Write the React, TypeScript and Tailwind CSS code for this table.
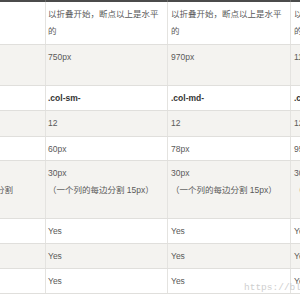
import React from "react";

type Row = {
  h: string;
  bg: string;
  c1?: React.ReactNode;
  c2: React.ReactNode;
  c3: React.ReactNode;
  c4: React.ReactNode;
  bold?: boolean;
};

const gutter = (
  <>
    30px
    <br />
    （一个列的每边分割 15px）
  </>
);

const first = (
  <>
    以折叠开始，断点以上是水平
    <br />
    的
  </>
);

const rows: Row[] = [
  { h: "h-[43px]", bg: "bg-white", c2: first, c3: first, c4: first },
  { h: "h-[41px]", bg: "bg-[#f4f3f0]", c2: "750px", c3: "970px", c4: "1170px" },
  { h: "h-[25px]", bg: "bg-white", c2: ".col-sm-", c3: ".col-md-", c4: ".col-lg-", bold: true },
  { h: "h-[26px]", bg: "bg-[#f4f3f0]", c2: "12", c3: "12", c4: "12" },
  { h: "h-[24px]", bg: "bg-white", c2: "60px", c3: "78px", c4: "95px" },
  {
    h: "h-[58px]",
    bg: "bg-[#f4f3f0]",
    c1: (
      <>
        <br />
        <span className="ml-[-4px]">分割</span>
      </>
    ),
    c2: gutter,
    c3: gutter,
    c4: gutter,
  },
  { h: "h-[25px]", bg: "bg-white", c2: "Yes", c3: "Yes", c4: "Yes" },
  { h: "h-[25px]", bg: "bg-[#f4f3f0]", c2: "Yes", c3: "Yes", c4: "Yes" },
  { h: "h-[25px]", bg: "bg-white", c2: "Yes", c3: "Yes", c4: "Yes" },
];

export default function App() {
  return (
    <div
      className="relative w-[300px] h-[300px] overflow-hidden bg-white text-[8.5px] leading-[17px] text-[#5a5a5a]"
      style={{ fontFamily: '"Liberation Sans", "Noto Sans CJK SC", sans-serif' }}
    >
      <div className="flex h-[2px]">
        <div className="w-[46px] bg-[#4b4b4b] border-r border-[#6a6a6a]" />
        <div className="w-[122px] bg-[#4b4b4b] border-r border-[#6a6a6a]" />
        <div className="w-[123px] bg-[#4b4b4b] border-r border-[#6a6a6a]" />
        <div className="flex-1 bg-[#4b4b4b]" />
      </div>
      {rows.map((r, i) => (
        <div key={i} className={`flex ${r.h} ${r.bg} border-b border-[#e0dfdc]`}>
          <div className="w-[46px] shrink-0 border-r border-[#e4e3e0] pt-[4px] whitespace-nowrap overflow-hidden">
            {r.c1}
          </div>
          <div
            className={`w-[122px] shrink-0 border-r border-[#e4e3e0] pl-[2px] pt-[4px] whitespace-nowrap overflow-hidden ${
              r.bold ? "font-bold text-[#333]" : ""
            }`}
          >
            {r.c2}
          </div>
          <div
            className={`w-[123px] shrink-0 border-r border-[#e4e3e0] pl-[3px] pt-[4px] whitespace-nowrap overflow-hidden ${
              r.bold ? "font-bold text-[#333]" : ""
            }`}
          >
            {r.c3}
          </div>
          <div
            className={`flex-1 min-w-0 pl-[3px] pt-[4px] whitespace-nowrap overflow-hidden ${
              r.bold ? "font-bold text-[#333]" : ""
            }`}
          >
            {r.c4}
          </div>
        </div>
      ))}
      <div
        className="absolute left-[244px] top-[283px] whitespace-nowrap text-[9.5px] leading-[10px] text-[#cfcfcf]"
        style={{ fontFamily: '"Liberation Mono", monospace' }}
      >
        https://blog.csdn.net/
      </div>
    </div>
  );
}
